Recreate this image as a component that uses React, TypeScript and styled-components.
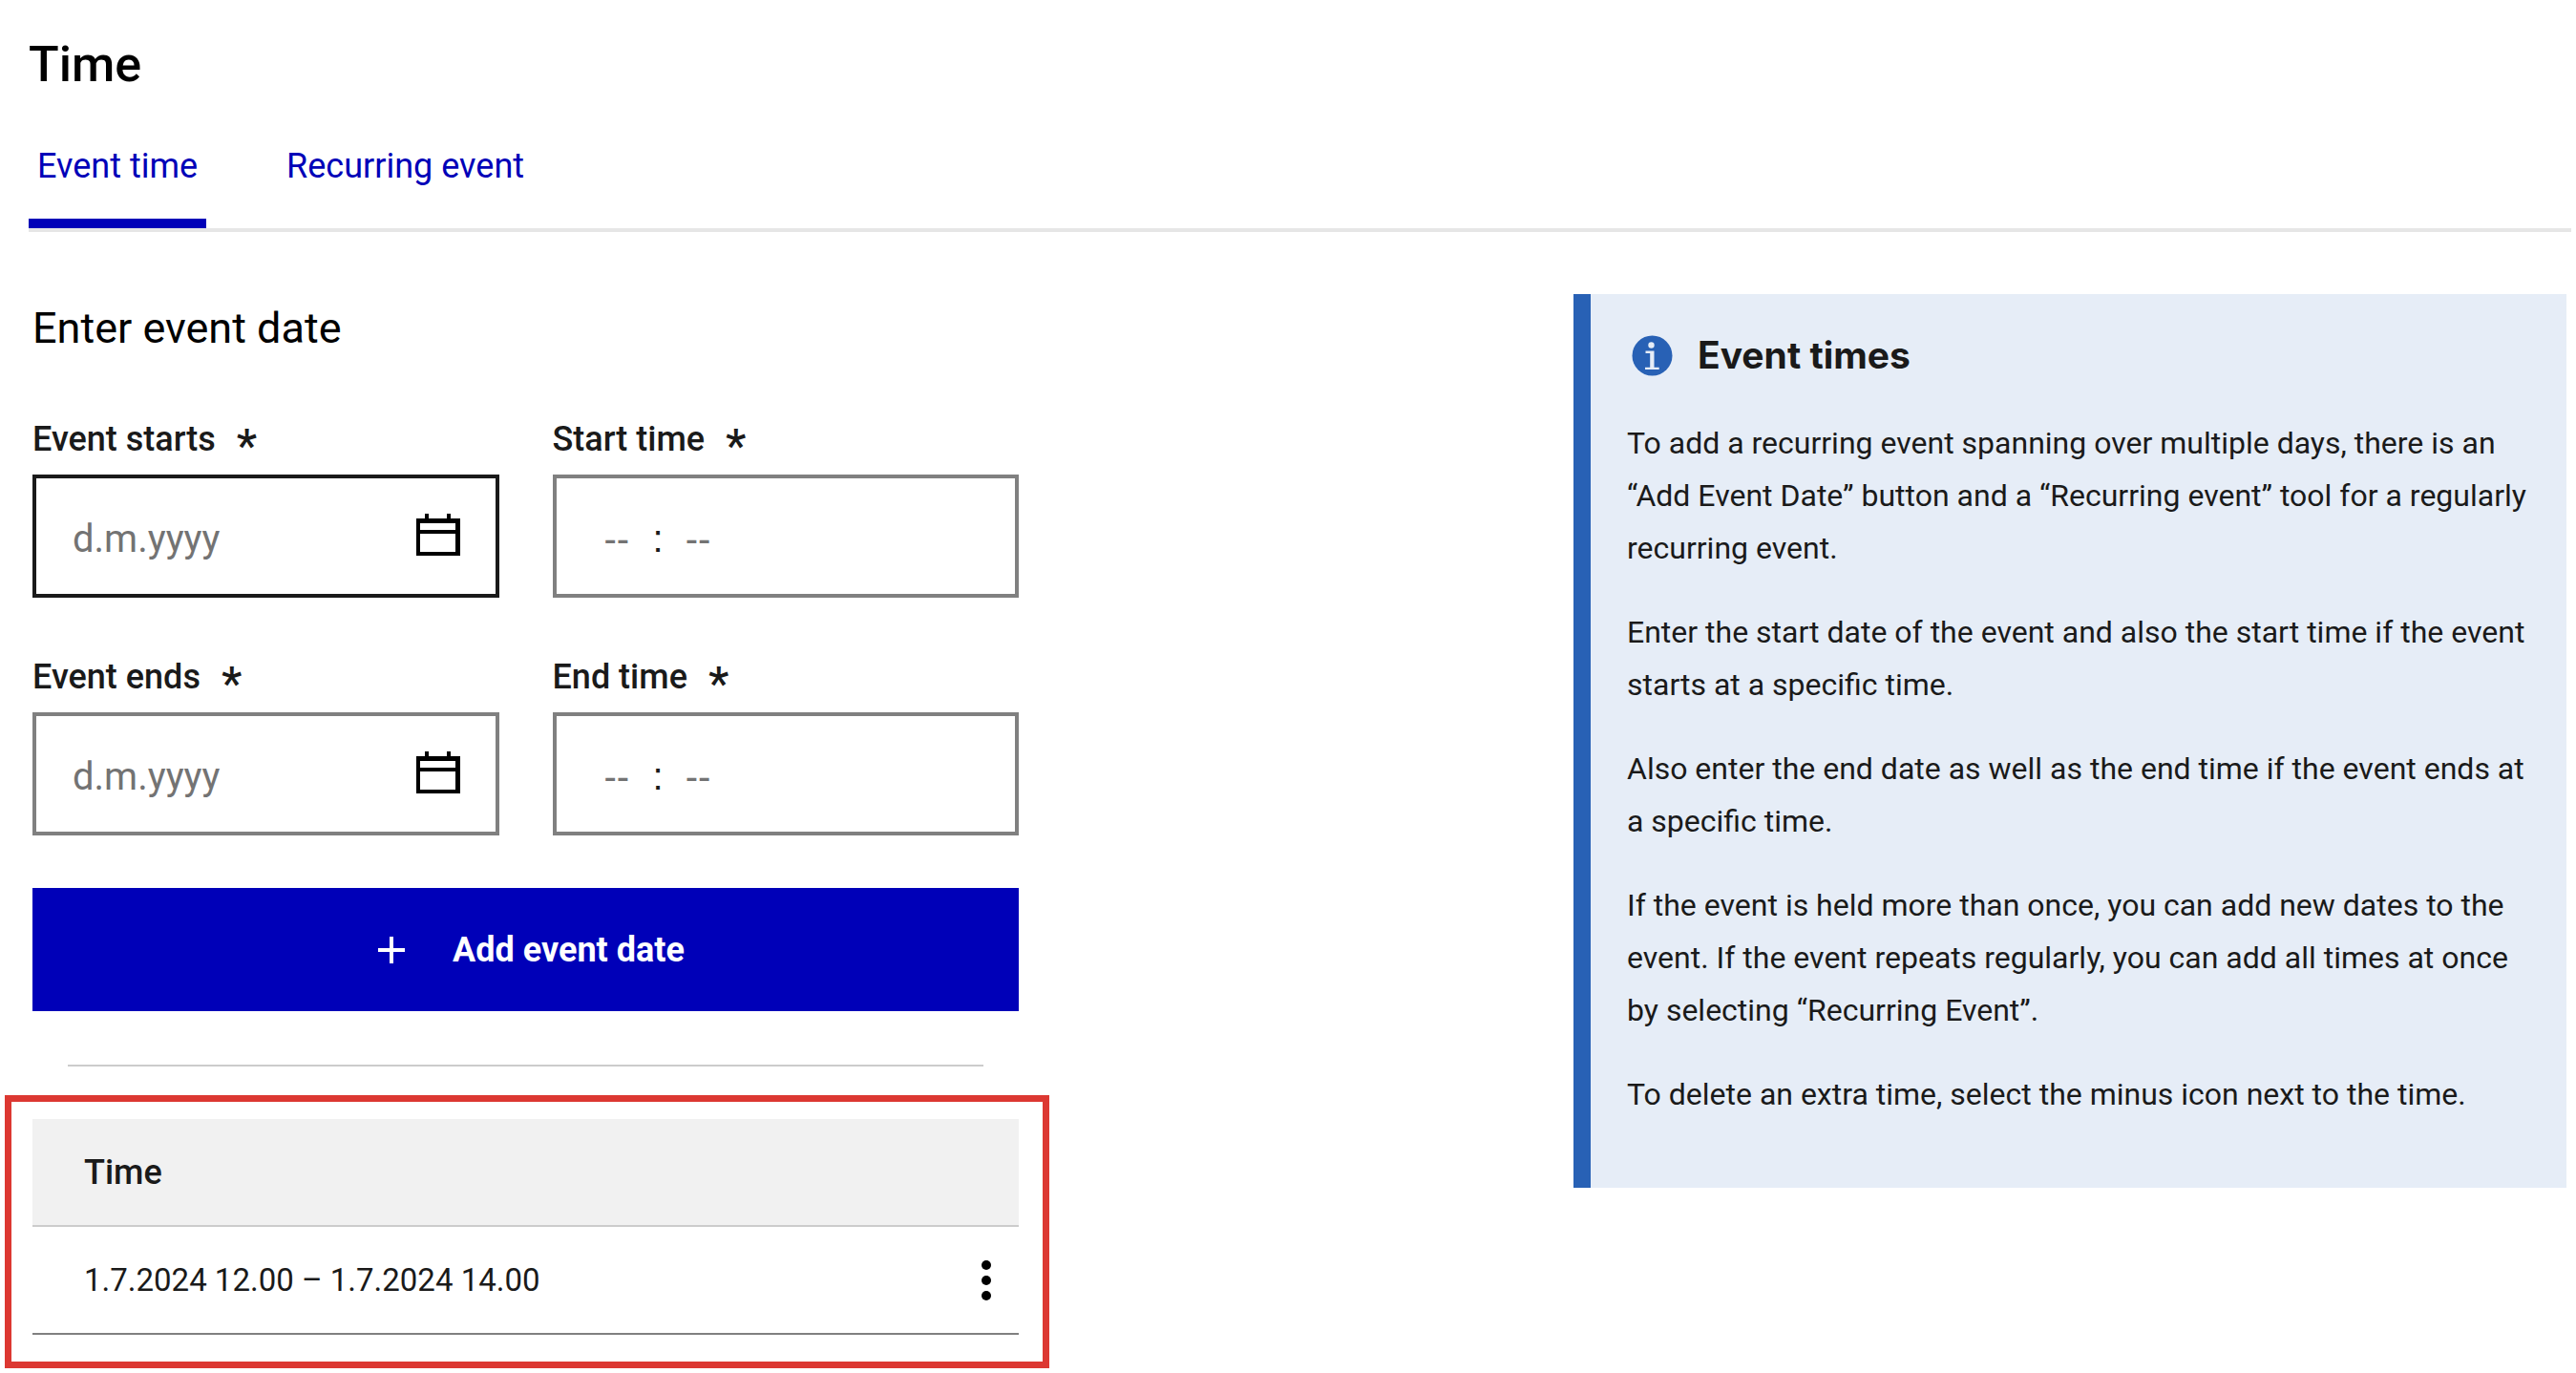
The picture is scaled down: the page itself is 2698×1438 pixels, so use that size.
import { useId, useState } from "react";
import styled, { createGlobalStyle } from "styled-components";

const GlobalStyle = createGlobalStyle`
  *, *::before, *::after { box-sizing: border-box; }
  body {
    margin: 0;
    background: #ffffff;
    color: #1a1a1a;
    font-family: Roboto, "Liberation Sans", sans-serif;
    font-size: 36px;
    line-height: 48px;
  }
  button, input { font: inherit; color: inherit; }
`;

const Page = styled.main`
  padding: 36px 5px 5px 30px;
`;

const Title = styled.h1`
  margin: 0 0 24px;
  font-size: 52px;
  font-weight: 500;
  line-height: 64px;
  color: #000000;
`;

const Tabs = styled.nav`
  display: flex;
  gap: 75px;
  border-bottom: 4px solid #e6e6e6;
`;

const Tab = styled.button<{ $active: boolean }>`
  padding: 26px 9px 31px;
  border: 0;
  border-bottom: 10px solid ${(p) => (p.$active ? "#0000b8" : "transparent")};
  background: none;
  color: #0000b8;
  cursor: pointer;
`;

const Content = styled.div`
  display: grid;
  grid-template-columns: minmax(0, 1033fr) minmax(0, 1040fr);
  gap: 581px;
  align-items: start;
  padding: 65px 5px 0 4px;
`;

const FormColumn = styled.section`
  padding-top: 8px;
`;

const SectionTitle = styled.h2`
  margin: 0 0 64px;
  font-size: 45px;
  font-weight: 400;
  line-height: 56px;
  color: #000000;
`;

const Fields = styled.div`
  display: grid;
  grid-template-columns: minmax(0, 1fr) minmax(0, 1fr);
  gap: 59px 56px;
`;

const Field = styled.div`
  display: flex;
  flex-direction: column;
  gap: 13px;
`;

const Label = styled.label`
  display: flex;
  gap: 22px;
  height: 48px;
  font-weight: 500;
`;

const Required = styled.span`
  font-size: 48px;
  line-height: 62px;
`;

const Box = styled.div<{ $focused?: boolean }>`
  display: flex;
  align-items: center;
  height: 129px;
  border: 4px solid ${(p) => (p.$focused ? "#1a1a1a" : "#808080")};
  font-size: 40px;
`;

const DateInput = styled.input`
  flex: 1;
  min-width: 0;
  height: 100%;
  padding: 5px 0 0 38px;
  border: 0;
  outline: 0;
  background: none;
  &::placeholder { color: #737373; opacity: 1; }
`;

const IconButton = styled.button`
  display: flex;
  padding: 0;
  border: 0;
  background: none;
  color: #000000;
  cursor: pointer;
`;

const CalendarButton = styled(IconButton)`
  margin-right: 37px;
  padding-bottom: 3px;
`;

const TimeBox = styled(Box)`
  gap: 23px;
  padding: 4px 0 0 50px;
  font-family: "Liberation Sans", Arial, sans-serif;
`;

const TimePart = styled.input`
  width: 28px;
  padding: 0;
  border: 0;
  outline: 0;
  background: none;
  &::placeholder { color: #737373; opacity: 1; }
`;

const AddButton = styled.button`
  display: flex;
  align-items: center;
  justify-content: center;
  gap: 50px;
  width: 100%;
  height: 129px;
  margin-top: 55px;
  padding: 0 0 0 12px;
  border: 0;
  background: #0000b8;
  color: #ffffff;
  font-weight: 700;
  cursor: pointer;
`;

const Divider = styled.hr`
  height: 2px;
  margin: 56px 37px 30px;
  border: 0;
  background: #cccccc;
`;

const Highlight = styled.div`
  margin: 0 -32px 0 -29px;
  padding: 18px 25px 28px 22px;
  border: 7px solid #dc3832;
`;

const Table = styled.table`
  width: 100%;
  border-collapse: separate;
  border-spacing: 0;
  text-align: left;
`;

const HeadCell = styled.th`
  height: 113px;
  padding: 0 0 0 54px;
  border-bottom: 2px solid #cccccc;
  background: #f1f1f1;
  font-weight: 500;
`;

const Cell = styled.td`
  height: 113px;
  padding: 0 0 0 54px;
  border-bottom: 2px solid #808080;
  font-size: 33px;
`;

const ActionCell = styled(Cell)`
  padding: 0 28px 0 0;
  ${IconButton} { margin-left: auto; }
`;

const Notice = styled.aside`
  padding: 40px 30px 70px 38px;
  border-left: 18px solid #2861b5;
  background: #e6edf7;
`;

const NoticeTitle = styled.h3`
  display: flex;
  align-items: center;
  gap: 26px;
  margin: 0 0 41px;
  padding-left: 5px;
  font-family: Inter, "Liberation Sans", sans-serif;
  font-size: 39px;
  font-weight: 700;
  line-height: 48px;
`;

const NoticeText = styled.p`
  margin: 0 0 33px;
  font-size: 32px;
  line-height: 55px;
  &:last-child { margin-bottom: 0; }
`;

const CalendarIcon = () => (
  <svg width="46" height="44" viewBox="0 0 46 44" fill="currentColor" aria-hidden="true">
    <path d="M9 0h4v5h19V0h4v5h10v39H0V5h9zM4 10v7h37v-7zM4 21v19h37V21z" fillRule="evenodd" />
  </svg>
);

const PlusIcon = () => (
  <svg width="28" height="28" viewBox="0 0 28 28" fill="currentColor" aria-hidden="true">
    <path d="M12 0h4v12h12v4H16v12h-4V16H0v-4h12z" />
  </svg>
);

const KebabIcon = () => (
  <svg width="12" height="44" viewBox="0 0 12 44" fill="currentColor" aria-hidden="true">
    <circle cx="6" cy="6" r="5" />
    <circle cx="6" cy="22" r="5" />
    <circle cx="6" cy="38" r="5" />
  </svg>
);

const InfoIcon = () => (
  <svg width="43" height="43" viewBox="0 0 43 43" aria-hidden="true">
    <circle cx="21.5" cy="21.5" r="21" fill="#2861b5" />
    <circle cx="20.5" cy="10.5" r="3.2" fill="#e6edf7" />
    <path d="M14.5 16.5h9v17.2h5.2V36H14v-2.3h5.2V19h-4.7z" fill="#e6edf7" />
  </svg>
);

function DateField({ label, focused }: { label: string; focused?: boolean }) {
  const id = useId();
  return (
    <Field>
      <Label htmlFor={id}>
        {label}
        <Required aria-hidden="true">*</Required>
      </Label>
      <Box $focused={focused}>
        <DateInput id={id} placeholder="d.m.yyyy" required />
        <CalendarButton type="button" aria-label="Choose date">
          <CalendarIcon />
        </CalendarButton>
      </Box>
    </Field>
  );
}

function TimeField({ label }: { label: string }) {
  const id = useId();
  return (
    <Field>
      <Label htmlFor={id}>
        {label}
        <Required aria-hidden="true">*</Required>
      </Label>
      <TimeBox>
        <TimePart id={id} placeholder="--" maxLength={2} required />
        <span>:</span>
        <TimePart aria-label="minutes" placeholder="--" maxLength={2} required />
      </TimeBox>
    </Field>
  );
}

const tabs = ["Event time", "Recurring event"];
const times = ["1.7.2024 12.00 – 1.7.2024 14.00"];
const notice = [
  "To add a recurring event spanning over multiple days, there is an “Add Event Date” button and a “Recurring event” tool for a regularly recurring event.",
  "Enter the start date of the event and also the start time if the event starts at a specific time.",
  "Also enter the end date as well as the end time if the event ends at a specific time.",
  "If the event is held more than once, you can add new dates to the event. If the event repeats regularly, you can add all times at once by selecting “Recurring Event”.",
  "To delete an extra time, select the minus icon next to the time.",
];

export default function App() {
  const [active, setActive] = useState(tabs[0]);
  return (
    <>
      <GlobalStyle />
      <Page>
        <Title>Time</Title>
        <Tabs>
          {tabs.map((tab) => (
            <Tab key={tab} type="button" $active={tab === active} onClick={() => setActive(tab)}>
              {tab}
            </Tab>
          ))}
        </Tabs>
        <Content>
          <FormColumn>
            <SectionTitle>Enter event date</SectionTitle>
            <Fields>
              <DateField label="Event starts" focused />
              <TimeField label="Start time" />
              <DateField label="Event ends" />
              <TimeField label="End time" />
            </Fields>
            <AddButton type="button">
              <PlusIcon />
              Add event date
            </AddButton>
            <Divider />
            <Highlight>
              <Table>
                <thead>
                  <tr>
                    <HeadCell colSpan={2}>Time</HeadCell>
                  </tr>
                </thead>
                <tbody>
                  {times.map((time) => (
                    <tr key={time}>
                      <Cell>{time}</Cell>
                      <ActionCell>
                        <IconButton type="button" aria-label="Actions">
                          <KebabIcon />
                        </IconButton>
                      </ActionCell>
                    </tr>
                  ))}
                </tbody>
              </Table>
            </Highlight>
          </FormColumn>
          <Notice>
            <NoticeTitle>
              <InfoIcon />
              Event times
            </NoticeTitle>
            {notice.map((text) => (
              <NoticeText key={text}>{text}</NoticeText>
            ))}
          </Notice>
        </Content>
      </Page>
    </>
  );
}
